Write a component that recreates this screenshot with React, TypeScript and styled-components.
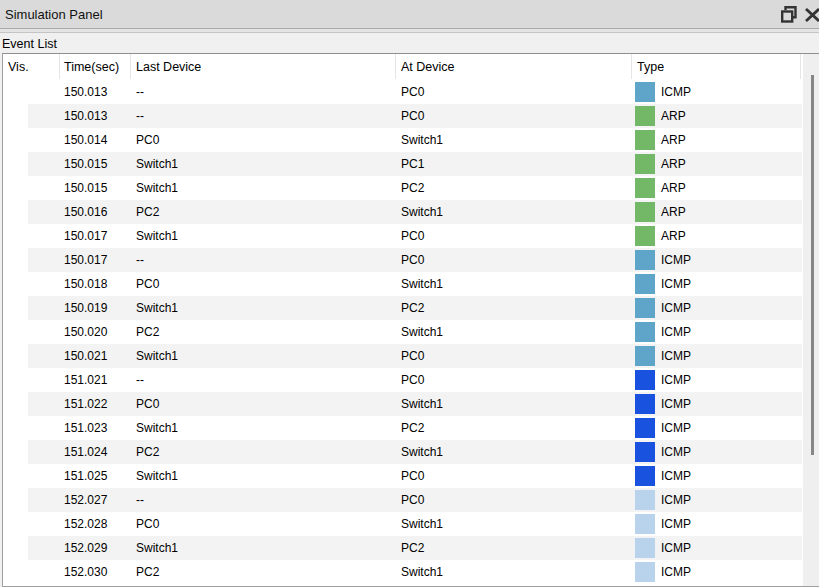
import React from 'react';
import styled, { createGlobalStyle } from 'styled-components';

type EventRow = {
  time: string;
  last: string;
  at: string;
  type: 'ICMP' | 'ARP';
  color: string;
};

const TEAL = '#5fa5c9';
const GREEN = '#73b866';
const BLUE = '#1a52e0';
const PALE = '#b9d3ec';

const events: EventRow[] = [
  { time: '150.013', last: '--', at: 'PC0', type: 'ICMP', color: TEAL },
  { time: '150.013', last: '--', at: 'PC0', type: 'ARP', color: GREEN },
  { time: '150.014', last: 'PC0', at: 'Switch1', type: 'ARP', color: GREEN },
  { time: '150.015', last: 'Switch1', at: 'PC1', type: 'ARP', color: GREEN },
  { time: '150.015', last: 'Switch1', at: 'PC2', type: 'ARP', color: GREEN },
  { time: '150.016', last: 'PC2', at: 'Switch1', type: 'ARP', color: GREEN },
  { time: '150.017', last: 'Switch1', at: 'PC0', type: 'ARP', color: GREEN },
  { time: '150.017', last: '--', at: 'PC0', type: 'ICMP', color: TEAL },
  { time: '150.018', last: 'PC0', at: 'Switch1', type: 'ICMP', color: TEAL },
  { time: '150.019', last: 'Switch1', at: 'PC2', type: 'ICMP', color: TEAL },
  { time: '150.020', last: 'PC2', at: 'Switch1', type: 'ICMP', color: TEAL },
  { time: '150.021', last: 'Switch1', at: 'PC0', type: 'ICMP', color: TEAL },
  { time: '151.021', last: '--', at: 'PC0', type: 'ICMP', color: BLUE },
  { time: '151.022', last: 'PC0', at: 'Switch1', type: 'ICMP', color: BLUE },
  { time: '151.023', last: 'Switch1', at: 'PC2', type: 'ICMP', color: BLUE },
  { time: '151.024', last: 'PC2', at: 'Switch1', type: 'ICMP', color: BLUE },
  { time: '151.025', last: 'Switch1', at: 'PC0', type: 'ICMP', color: BLUE },
  { time: '152.027', last: '--', at: 'PC0', type: 'ICMP', color: PALE },
  { time: '152.028', last: 'PC0', at: 'Switch1', type: 'ICMP', color: PALE },
  { time: '152.029', last: 'Switch1', at: 'PC2', type: 'ICMP', color: PALE },
  { time: '152.030', last: 'PC2', at: 'Switch1', type: 'ICMP', color: PALE }
];

export default function App() {
  return (
    <>
      <GlobalStyle />
      <Panel>
        <TitleBar>
          <span>Simulation Panel</span>
          <WindowButtons>
            <svg width="16" height="17" viewBox="0 0 16 17">
              <path
                d="M4.5 4.2V1.2h10v10h-3"
                fill="none"
                stroke="#333"
                strokeWidth="2.4"
              />
              <rect
                x="1.2"
                y="5.5"
                width="10"
                height="10"
                fill="none"
                stroke="#333"
                strokeWidth="2.4"
              />
            </svg>
            <svg width="16" height="14" viewBox="0 0 16 14">
              <path
                d="M1 1l13 12M14 1L1 13"
                stroke="#333"
                strokeWidth="2.8"
              />
            </svg>
          </WindowButtons>
        </TitleBar>
        <Divider />
        <SectionLabel>Event List</SectionLabel>
        <Frame>
          <List>
            <HeaderRow>
              <HeadCell>Vis.</HeadCell>
              <HeadCell>Time(sec)</HeadCell>
              <HeadCell>Last Device</HeadCell>
              <HeadCell>At Device</HeadCell>
              <HeadCell>Type</HeadCell>
            </HeaderRow>
            {events.map((ev, i) => (
              <Row key={i} striped={i % 2 === 1}>
                <Cell />
                <Cell>{ev.time}</Cell>
                <Cell>{ev.last}</Cell>
                <Cell>{ev.at}</Cell>
                <TypeCell>
                  <Swatch color={ev.color} />
                  {ev.type}
                </TypeCell>
              </Row>
            ))}
          </List>
          <ScrollTrack>
            <ScrollThumb />
          </ScrollTrack>
        </Frame>
      </Panel>
    </>
  );
}

const GlobalStyle = createGlobalStyle`
  html, body {
    margin: 0;
    padding: 0;
    overflow: hidden;
    background: #f0f0f0;
  }
  body {
    font-family: 'Liberation Sans', Arial, sans-serif;
    font-size: 12px;
    color: #000;
  }
`;

const Panel = styled.div`
  width: 819px;
  height: 587px;
  display: flex;
  flex-direction: column;
  overflow: hidden;
  background: #f0f0f0;
`;

const TitleBar = styled.div`
  height: 28px;
  flex: none;
  display: flex;
  align-items: center;
  justify-content: space-between;
  padding-left: 5px;
  background: #dadada;
  border-bottom: 1px solid #a9a9a9;
  font-size: 13px;
  color: #111;
`;

const WindowButtons = styled.div`
  display: flex;
  align-items: center;
  gap: 8px;
  margin-right: -2px;
  padding-top: 1px;

  svg {
    display: block;
  }
`;

const Divider = styled.div`
  height: 3px;
  flex: none;
  background: #e4e4e4;
  border-bottom: 1px solid #c4c4c4;
`;

const SectionLabel = styled.div`
  height: 20px;
  flex: none;
  display: flex;
  align-items: center;
  padding-left: 2px;
  padding-top: 1px;
  box-sizing: border-box;
  font-size: 12.5px;
`;

const Frame = styled.div`
  flex: 1;
  display: flex;
  margin-left: 2px;
  border-top: 1px solid #8f8f8f;
  border-left: 1px solid #a0a0a0;
  border-bottom: 1px solid #a0a0a0;
  background: #fff;
  min-height: 0;
`;

const List = styled.div`
  width: 799px;
  flex: none;
  display: flex;
  flex-direction: column;
  overflow: hidden;
`;

const HeaderRow = styled.div`
  height: 26px;
  flex: none;
  display: grid;
  grid-template-columns: 57px 71px 265px 236px 169px;
`;

const HeadCell = styled.div`
  display: flex;
  align-items: center;
  padding: 1px 0 0 5px;
  border-right: 1px solid #e5e5e5;
  margin-bottom: 1px;
  font-size: 12.5px;

  &:nth-child(2) {
    padding-left: 4px;
  }
`;

const Row = styled.div<{ striped: boolean }>`
  height: 24px;
  flex: none;
  display: grid;
  grid-template-columns: 32px 71px 265px 236px 170px;
  margin-left: 25px;
  background: ${(p) => (p.striped ? '#f3f3f3' : '#fff')};
`;

const Cell = styled.div`
  display: flex;
  align-items: center;
  padding-left: 5px;
  white-space: nowrap;

  &:nth-child(2) {
    padding-left: 4px;
  }
`;

const TypeCell = styled(Cell)`
  padding-left: 3px;
  gap: 6px;
`;

const Swatch = styled.span<{ color: string }>`
  width: 20px;
  height: 20px;
  flex: none;
  background: ${(p) => p.color};
`;

const ScrollTrack = styled.div`
  width: 17px;
  flex: none;
  margin-left: 1px;
  background: #efefef;
  padding: 21px 0 0 8px;
  box-sizing: border-box;
`;

const ScrollThumb = styled.div`
  width: 3px;
  height: 380px;
  background: #868686;
`;
